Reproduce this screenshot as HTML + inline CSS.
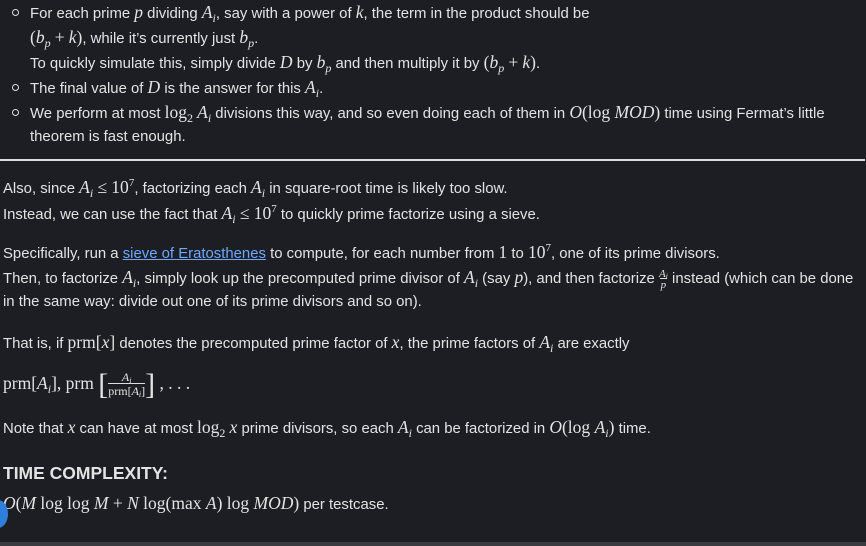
<!DOCTYPE html>
<html><head><meta charset="utf-8"><style>
html,body{margin:0;padding:0;background:#1d1e23;}
body{width:866px;height:546px;position:relative;overflow:hidden;font-family:"Liberation Sans",sans-serif;font-size:14.9px;color:#e3e3e3;}
.l{position:absolute;white-space:nowrap;line-height:20px;}
.m{font-family:"Liberation Serif",serif;font-style:italic;font-size:17.5px;}
.r{font-family:"Liberation Serif",serif;font-size:17.5px;}
sub{font-size:12px;vertical-align:baseline;position:relative;top:.3em;}
sup{font-size:11px;vertical-align:baseline;position:relative;top:-.6em;}
.b{position:absolute;width:5px;height:5px;border:1px solid #ddd;border-radius:50%;}
a{color:#6ea8ff;text-decoration:underline;}
</style></head><body>
<div class="b" style="left:12px;top:9px"></div>
<div class="l" style="left:30px;top:2px">For each prime <span class="m">p</span> dividing <span class="m">A<sub>i</sub></span>, say with a power of <span class="m">k</span>, the term in the product should be</div>
<div class="l" style="left:30px;top:27px"><span class="r">(</span><span class="m">b<sub>p</sub></span> <span class="r">+</span> <span class="m">k</span><span class="r">)</span>, while it’s currently just <span class="m">b<sub>p</sub></span>.</div>
<div class="l" style="left:30px;top:52px">To quickly simulate this, simply divide <span class="m">D</span> by <span class="m">b<sub>p</sub></span> and then multiply it by <span class="r">(</span><span class="m">b<sub>p</sub></span> <span class="r">+</span> <span class="m">k</span><span class="r">)</span>.</div>
<div class="b" style="left:12px;top:84px"></div>
<div class="l" style="left:30px;top:77px">The final value of <span class="m">D</span> is the answer for this <span class="m">A<sub>i</sub></span>.</div>
<div class="b" style="left:12px;top:109px"></div>
<div class="l" style="left:30px;top:102px">We perform at most <span class="r">log<sub>2</sub></span> <span class="m">A<sub>i</sub></span> divisions this way, and so even doing each of them in <span class="m">O</span><span class="r">(log </span><span class="m">MOD</span><span class="r">)</span> time using Fermat’s little</div>
<div class="l" style="left:30px;top:127px">theorem is fast enough.</div>
<div style="position:absolute;left:0;top:159px;width:865px;height:2px;background:#ddd"></div>
<div class="l" style="left:3px;top:177px">Also, since <span class="m">A<sub>i</sub></span> <span class="r">≤ 10<sup>7</sup></span>, factorizing each <span class="m">A<sub>i</sub></span> in square-root time is likely too slow.</div>
<div class="l" style="left:3px;top:203px">Instead, we can use the fact that <span class="m">A<sub>i</sub></span> <span class="r">≤ 10<sup>7</sup></span> to quickly prime factorize using a sieve.</div>
<div class="l" style="left:3px;top:242px">Specifically, run a <a>sieve of Eratosthenes</a> to compute, for each number from <span class="r">1</span> to <span class="r">10<sup>7</sup></span>, one of its prime divisors.</div>
<div class="l" style="left:3px;top:267px">Then, to factorize <span class="m">A<sub>i</sub></span>, simply look up the precomputed prime divisor of <span class="m">A<sub>i</sub></span> (say <span class="m">p</span>), and then factorize <span class="m" style="font-size:11px;display:inline-block;text-align:center;vertical-align:middle;line-height:10px">A<sub style="font-size:8px">i</sub><br><span style="border-top:1px solid #ddd;padding:0 1px">p</span></span> instead (which can be done</div>
<div class="l" style="left:3px;top:292px">in the same way: divide out one of its prime divisors and so on).</div>
<div class="l" style="left:3px;top:332px">That is, if <span class="r">prm[</span><span class="m">x</span><span class="r">]</span> denotes the precomputed prime factor of <span class="m">x</span>, the prime factors of <span class="m">A<sub>i</sub></span> are exactly</div>
<div class="l" style="left:3px;top:368px;line-height:30px"><span class="r">prm[</span><span class="m">A<sub>i</sub></span><span class="r">], prm </span><span class="r" style="font-size:30px;vertical-align:middle">[</span><span class="m" style="font-size:12px;display:inline-block;text-align:center;vertical-align:middle;line-height:12px">A<sub style="font-size:8px">i</sub><br><span style="border-top:1px solid #ddd;font-style:normal">prm[<i>A<sub style="font-size:8px">i</sub></i>]</span></span><span class="r" style="font-size:30px;vertical-align:middle">]</span><span class="r"> , . . .</span></div>
<div class="l" style="left:3px;top:417px">Note that <span class="m">x</span> can have at most <span class="r">log<sub>2</sub></span> <span class="m">x</span> prime divisors, so each <span class="m">A<sub>i</sub></span> can be factorized in <span class="m">O</span><span class="r">(log </span><span class="m">A<sub>i</sub></span><span class="r">)</span> time.</div>
<div class="l" style="left:3px;top:462px;font-size:17.5px;font-weight:bold;line-height:22px">TIME COMPLEXITY:</div>
<div class="l" style="left:3px;top:493px"><span class="m">O</span><span class="r">(</span><span class="m">M</span><span class="r"> log log </span><span class="m">M</span><span class="r"> + </span><span class="m">N</span><span class="r"> log(max </span><span class="m">A</span><span class="r">) log </span><span class="m">MOD</span><span class="r">)</span> per testcase.</div>
<div style="position:absolute;left:-12px;top:500px;width:20px;height:28px;border-radius:50%;background:#2f7fdc"></div>
<div style="position:absolute;left:0;top:542px;width:866px;height:4px;background:#3a3b40"></div>
</body></html>
